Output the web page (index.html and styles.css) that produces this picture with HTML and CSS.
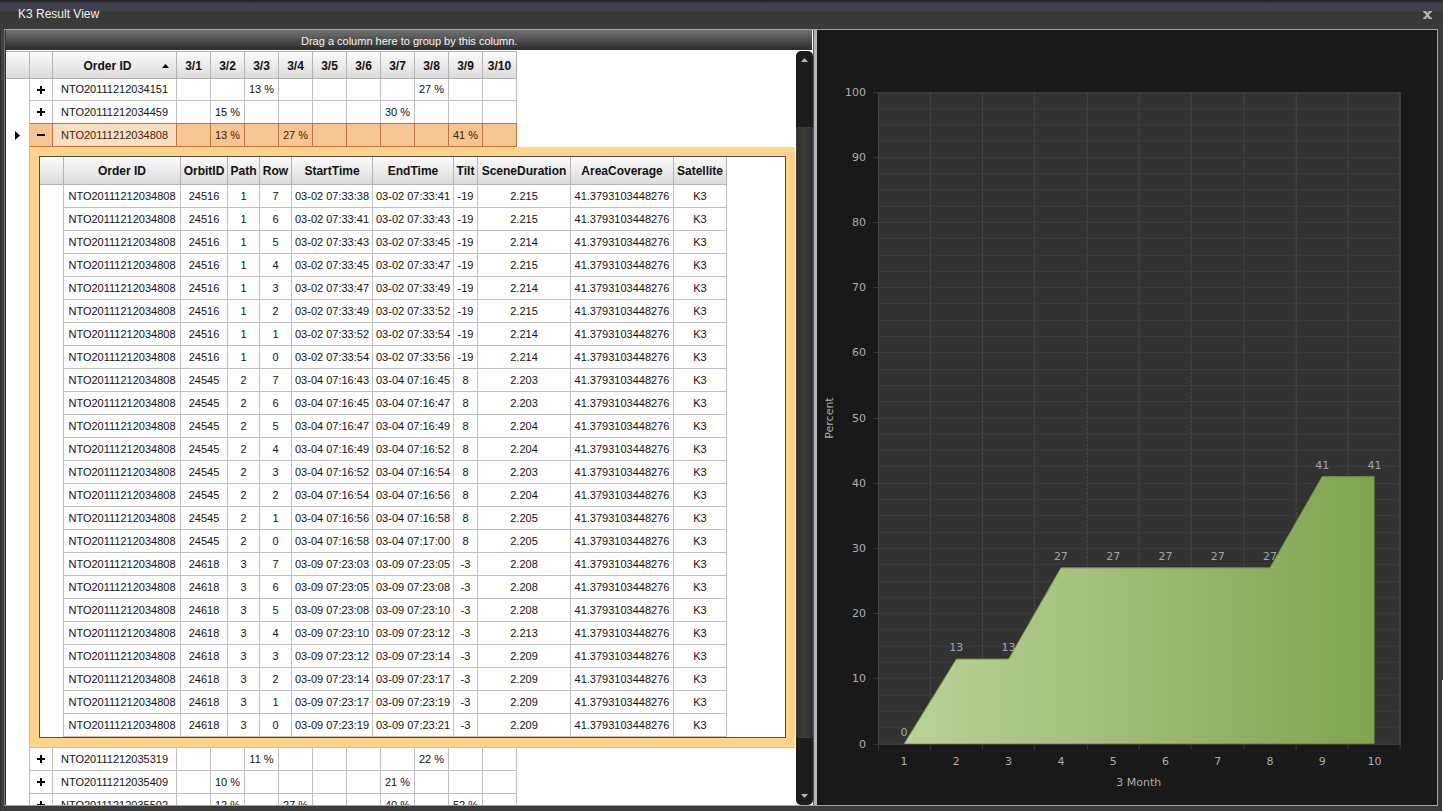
FILE: index.html
```html
<!DOCTYPE html>
<html lang="en">
<head>
<meta charset="utf-8">
<title>K3 Result View</title>
<link rel="stylesheet" href="styles.css">
</head>
<body>
<div class="window">
  <header class="titlebar">
    <h1 class="title">K3 Result View</h1>
    <button class="close" type="button" aria-label="Close">
      <svg width="9" height="8" viewBox="0 0 9 8"><path d="M0 0h3l1.500 2L6 0h3v1L7 2.500 5.800 4 7 5.500 9 7v1H6L4.500 6 3 8H0V7l2-1.500L3.200 4 2 2.500 0 1z" fill="#b4b4b4"/></svg>
    </button>
  </header>
  <main class="panes">
    <section class="grid-pane">
      <div class="group-bar">Drag a column here to group by this column.</div>
      <div class="grid-area">
        <div class="grid-view">
          <table class="grid orders">
            <colgroup><col class="c-mark"><col class="c-toggle"><col class="c-order"><col class="c-day" span="10"><col></colgroup>
            <thead>
              <tr>
                <th></th><th></th>
                <th><div class="sorted"><span>Order ID</span><svg width="7" height="4" viewBox="0 0 7 4"><path d="M0 4L3.500 0 7 4z"/></svg></div></th>
                <th>3/1</th><th>3/2</th><th>3/3</th><th>3/4</th><th>3/5</th><th>3/6</th><th>3/7</th><th>3/8</th><th>3/9</th><th>3/10</th>
                <td class="filler"></td>
              </tr>
            </thead>
            <tbody id="orders"></tbody>
          </table>
        </div>
        <div class="scrollbar">
          <button type="button" class="scroll-btn" aria-label="Scroll up"><svg width="7" height="4" viewBox="0 0 7 4"><path d="M0 4L3.500 0 7 4z" fill="#b8b8b8"/></svg></button>
          <div class="track"><div class="thumb"></div></div>
          <button type="button" class="scroll-btn" aria-label="Scroll down"><svg width="7" height="4" viewBox="0 0 7 4"><path d="M0 0h7L3.500 4z" fill="#b8b8b8"/></svg></button>
        </div>
      </div>
    </section>
    <div class="splitter"></div>
    <section class="chart-pane">
      <svg id="chart" class="chart" viewBox="0 0 620 775" role="img" aria-label="Percent by day of month 3">
        <defs>
          <linearGradient id="area" x1="0" x2="1" y1="0" y2="0">
            <stop offset="0" stop-color="#b9d397"/><stop offset="1" stop-color="#80a450"/>
          </linearGradient>
        </defs>
      </svg>
    </section>
  </main>
</div>
<script src="script.js"></script>
</body>
</html>
```
FILE: styles.css
```css
* { box-sizing: border-box; }
body {
  margin: 0;
  background: #3a3a3a;
  font-family: "Liberation Sans", Arial, sans-serif;
  font-size: 11px;
  color: #111;
}
button { padding: 0; border: 0; background: none; display: flex; align-items: center; justify-content: center; }
.window {
  height: 100vh;
  display: flex;
  flex-direction: column;
  padding: 0 5px 5px 4px;
  background:
    linear-gradient(#fff, #fff) right bottom / 1px 131px no-repeat,
    linear-gradient(#202023 0, #2c2c31 1px, #42424f 4px, #42424c 11px, #363836 12px, #3b3b3b 28px) top / 100% 29px no-repeat,
    linear-gradient(to right, #28282a, #444 2px, #3a3a3a 4px) left / 4px 100% no-repeat,
    linear-gradient(#3a3a3a, #3a3a3a);
}
.titlebar { flex: 0 0 29px; display: flex; align-items: center; justify-content: space-between; padding: 0 6px 0 14px; }
.title { margin: 0; font-size: 12px; font-weight: normal; line-height: 16px; padding-bottom: 2px; color: #f2f2f2; }
.panes { flex: 1; min-height: 0; display: flex; border: 1px solid #a2a2a5; border-left-color: #77777a; }
.grid-pane { flex: 808 1 0; min-width: 0; display: flex; flex-direction: column; background: #fff; border-left: 1px solid #2e2e2e; }
.group-bar {
  flex: 0 0 20px;
  line-height: 23px;
  text-align: center;
  color: #f5f5f5;
  overflow: hidden;
  background: linear-gradient(#737373, #2b2b2b);
  border-right: 1px solid #fff;
}
.grid-area { flex: 1; min-height: 0; display: flex; padding-top: 1px; }
.grid-view { flex: 1; min-width: 0; overflow: hidden; padding-right: 1px; }
.grid { border-collapse: separate; border-spacing: 0; table-layout: fixed; }
.orders { width: 100%; }
.c-mark { width: 24px; }
.c-toggle { width: 23px; }
.c-order { width: 124px; }
.c-day { width: 34px; }
.grid td, .grid th {
  height: 23px;
  padding: 0;
  text-align: center;
  line-height: 13px;
  white-space: nowrap;
  border: 0 solid #bfbfbf;
  border-width: 0 1px 1px 0;
}
.grid th {
  height: 28px;
  padding-top: 2px;
  font-size: 12px;
  background: linear-gradient(#fafafa, #dcdcdc);
  border-color: #b3b3b3;
}
.orders > thead th { border-top-width: 1px; }
.orders > tbody > tr:first-child > td { height: 22px; }
.grid .filler, .grid .mark { border-width: 0; }
.orders > tbody > tr > .mark { border-right: 1px solid #bfbfbf; }
.sorted { display: flex; align-items: center; padding-right: 7px; }
.sorted span { flex: 1; }
.toggle { width: 100%; height: 20px; }
.mark svg { display: block; margin: 0 auto; }
.grid .selected .cell { background: #f5c592; border-color: #c4713f; box-shadow: 0 -1px #c4713f; color: #43210a; }
.grid .selected .order { background: #fbdfc1; }
.grid .detail { padding: 9px; background: #ffd38a; border-right: 0; }
.inner { background: #fff; border: 1px solid #4e4e42; overflow: hidden; }
.scenes { width: 687px; }
.scenes .mark { border-right: 1px solid #bfbfbf; }
.s-mark { width: 24px; }
.s-order { width: 117px; }
.s-orbit { width: 47px; }
.s-num { width: 32px; }
.s-time { width: 81px; }
.s-duration { width: 93px; }
.s-area { width: 103px; }
.s-sat { width: 53px; }
.scrollbar { flex: 0 0 17px; display: flex; flex-direction: column; background: #1c1c1a; border-radius: 5px; }
.scroll-btn { flex: 0 0 18px; }
.track { flex: 1; min-height: 0; padding: 58px 0 49px; }
.thumb { height: 100%; background: linear-gradient(to right, #2f2f2d, #3e3e3a 45%, #2b2b30); border: 1px solid #3d3d40; border-radius: 2px; }
.splitter { flex: 0 0 4px; background: #b5b4b9; border-left: 1px solid #555; }
.chart-pane { flex: 620 1 0; min-width: 0; background: #191919; }
.chart { display: block; width: 100%; height: 100%; font-family: "DejaVu Sans", Verdana, sans-serif; font-size: 11px; fill: #adadad; }
.plot { fill: #323232; stroke: #454545; }
.row-line { stroke: #3d3d3d; }
.col-line { stroke: #4b4b4b; stroke-dasharray: 3 1; }
.tick { stroke: #3c3c3c; }
.end { text-anchor: end; }
.mid { text-anchor: middle; }
.value { fill: #a6a6a6; }
.outline { fill: none; stroke: #6f9440; }
```
FILE: script.js
```js
const orders = [
  ["NTO20111212034151", {3: 13, 8: 27}],
  ["NTO20111212034459", {2: 15, 7: 30}],
  ["NTO20111212034808", {2: 13, 4: 27, 9: 41}],
  ["NTO20111212035319", {3: 11, 8: 22}],
  ["NTO20111212035409", {2: 10, 7: 21}],
  ["NTO20111212035502", {2: 12, 4: 27, 7: 40, 9: 52}]
];
const selected = "NTO20111212034808";

// Each pass: orbit, path, date, tilt, scene boundary times, durations.
const passes = [
  [24516, 1, "03-02", -19, "07:33:38 07:33:41 07:33:43 07:33:45 07:33:47 07:33:49 07:33:52 07:33:54 07:33:56", "2.215 2.215 2.214 2.215 2.214 2.215 2.214 2.214"],
  [24545, 2, "03-04", 8, "07:16:43 07:16:45 07:16:47 07:16:49 07:16:52 07:16:54 07:16:56 07:16:58 07:17:00", "2.203 2.203 2.204 2.204 2.203 2.204 2.205 2.205"],
  [24618, 3, "03-09", -3, "07:23:03 07:23:05 07:23:08 07:23:10 07:23:12 07:23:14 07:23:17 07:23:19 07:23:21", "2.208 2.208 2.208 2.213 2.209 2.209 2.209 2.209"]
];

const icon = open => `<svg width="8" height="8" viewBox="0 0 8 8"><path d="M0 4h8${open ? "" : "M4 0v8"}" stroke="#000" stroke-width="2"/></svg>`;

function sceneTable() {
  const heads = ["Order ID", "OrbitID", "Path", "Row", "StartTime", "EndTime", "Tilt", "SceneDuration", "AreaCoverage", "Satellite"];
  const rows = passes.flatMap(([orbit, path, date, tilt, times, durations]) => {
    const t = times.split(" ");
    return durations.split(" ").map((d, i) =>
      [selected, orbit, path, 7 - i, `${date} ${t[i]}`, `${date} ${t[i + 1]}`, tilt, d, "41.3793103448276", "K3"]);
  });
  return `<div class="inner"><table class="grid scenes">
    <colgroup><col class="s-mark"><col class="s-order"><col class="s-orbit"><col class="s-num"><col class="s-num"><col class="s-time"><col class="s-time"><col class="s-mark"><col class="s-duration"><col class="s-area"><col class="s-sat"></colgroup>
    <thead><tr><th></th>${heads.map(h => `<th>${h}</th>`).join("")}</tr></thead>
    <tbody>${rows.map(r => `<tr><td class="mark"></td>${r.map(c => `<td>${c}</td>`).join("")}</tr>`).join("")}</tbody>
  </table></div>`;
}

document.getElementById("orders").innerHTML = orders.map(([id, days]) => {
  const open = id === selected;
  const cells = Array.from({length: 10}, (_, i) => `<td class="cell">${days[i + 1] ? days[i + 1] + " %" : ""}</td>`).join("");
  const marker = open ? '<svg width="5" height="9" viewBox="0 0 5 9"><path d="M0 0l5 4.500L0 9z"/></svg>' : "";
  const row = `<tr class="${open ? "selected" : ""}"><td class="mark">${marker}</td>
    <td class="cell"><button type="button" class="toggle" aria-label="${open ? "Collapse" : "Expand"} ${id}">${icon(open)}</button></td>
    <td class="cell order">${id}</td>${cells}<td class="filler"></td></tr>`;
  return open ? row + `<tr><td class="mark"></td><td class="detail" colspan="13">${sceneTable()}</td></tr>` : row;
}).join("");

const values = [0, 13, 13, 27, 27, 27, 27, 27, 41, 41];
const plot = {left: 61, right: 584, top: 62, bottom: 714};
const step = (plot.right - plot.left) / 10;
const px = i => plot.left + step * (i + 0.5);
const py = v => plot.bottom - v * (plot.bottom - plot.top) / 100;
const crisp = n => Math.floor(n) + 0.5;
let out = `<rect class="plot" x="${plot.left + 0.5}" y="${plot.top + 0.5}" width="522" height="652"/>`;
for (let v = 0; v <= 100; v += 2.5) {
  const y = crisp(py(v));
  out += `<path class="row-line" d="M${plot.left} ${y}H${plot.right}"/>`;
  if (v % 10 === 0) {
    out += `<path class="tick" d="M${plot.left - 5} ${y}h5"/><text class="end" x="49" y="${y + 3.5}">${v}</text>`;
  }
}
for (let i = 0; i <= 10; i++) {
  const x = crisp(Math.min(plot.left + step * i, plot.right - 1));
  out += `<path class="col-line" d="M${x} ${plot.top}V${plot.bottom}"/><path class="tick" d="M${x} ${plot.bottom}v6"/>`;
}
const line = values.map((v, i) => `${px(i)},${py(v)}`).join(" ");
out += `<polygon points="${line} ${px(9)},${plot.bottom}" fill="url(#area)"/><polyline class="outline" points="${line}"/>`;
values.forEach((v, i) => {
  out += `<text class="mid value" x="${px(i)}" y="${Math.round(py(v)) - 8}">${v}</text>`;
  out += `<text class="mid" x="${px(i)}" y="735">${i + 1}</text>`;
});
out += `<text class="mid" x="322" y="756">3 Month</text><text class="mid" transform="translate(16 388) rotate(-90)">Percent</text>`;
document.getElementById("chart").insertAdjacentHTML("beforeend", out);
```
